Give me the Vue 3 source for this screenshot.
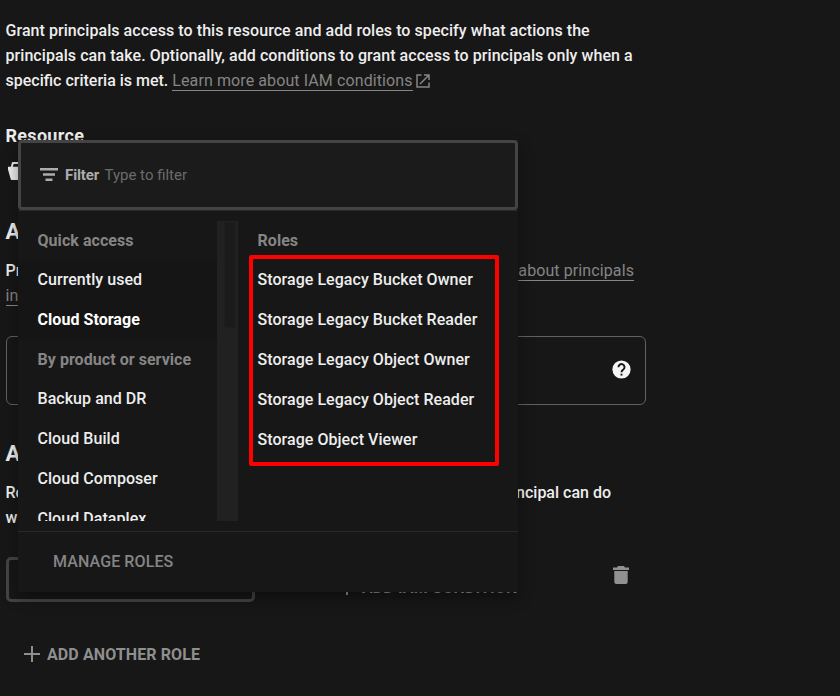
<script setup>
const menu = [
  { label: 'Quick access', type: 'header' },
  { label: 'Currently used', type: 'item shaded' },
  { label: 'Cloud Storage', type: 'item shaded active' },
  { label: 'By product or service', type: 'header' },
  { label: 'Backup and DR', type: 'item' },
  { label: 'Cloud Build', type: 'item' },
  { label: 'Cloud Composer', type: 'item' },
  { label: 'Cloud Dataplex', type: 'item' },
]
const roles = [
  'Storage Legacy Bucket Owner',
  'Storage Legacy Bucket Reader',
  'Storage Legacy Object Owner',
  'Storage Legacy Object Reader',
  'Storage Object Viewer',
]
</script>

<template>
  <main class="page">
    <p class="intro">
      Grant principals access to this resource and add roles to specify what actions the<br />
      principals can take. Optionally, add conditions to grant access to principals only when a<br />
      <span class="tight">specific criteria is met. </span><a class="link">Learn more about IAM conditions</a><svg class="external" viewBox="0 0 14 14"><path d="M5.500 1H1v12h12V8.500M8 1h5v5M13 1 4 10" /></svg>
    </p>

    <h3 class="resource-title">Resource</h3>
    <div class="resource">
      <svg class="bucket" viewBox="0 0 20 20"><path d="M0 5h3l1-4q.2-1 1-1h8q1 0 1.200 1l1 4H18v3l-2 10q0 1-1 1H4q-1 0-1.200-1L0 8zM5 5h8l-1-3H6z" /></svg>
    </div>

    <h2 class="title principals-title">Add principals</h2>
    <div class="split wide">
      <span>Principals are users, groups, domains</span><a class="link">about principals</a>
    </div>
    <div class="split"><a class="link">in IAM</a></div>
    <div class="principal-field">
      <svg class="help" viewBox="0 0 20 20">
        <circle cx="10" cy="10" r="9.600" fill="#f5f5f5" />
        <path d="M6.800 7.600a3.200 3.200 0 1 1 5.300 2.300C10.900 10.900 10 11.300 10 13" fill="none" stroke="#171717" stroke-width="2" />
        <path d="M9 14.400h2v2H9z" fill="#171717" />
      </svg>
    </div>

    <h2 class="title roles-title">Assign roles</h2>
    <div class="split medium">
      <span>Roles are composed of sets of permissions</span><span>principal can do</span>
    </div>
    <div class="split">with this resource.</div>
    <div class="role-row">
      <div class="role-field"></div>
      <button class="condition">
        <svg class="plus" viewBox="0 0 16 16"><path d="M8 0v16M0 8h16" /></svg>
        <span>ADD IAM CONDITION</span>
      </button>
      <svg class="trash" viewBox="0 0 16 18"><path d="M5 0h6l1 1.500h4v2.500H0V1.500h4zM1.300 5h13.400v11q0 2-2 2H3.300q-2 0-2-2z" /></svg>
    </div>
    <button class="another">
      <svg class="plus" viewBox="0 0 16 16"><path d="M8 0v16M0 8h16" /></svg>
      <span>ADD ANOTHER ROLE</span>
    </button>

    <section class="popup">
      <div class="filter">
        <svg class="filter-icon" viewBox="0 0 18 13"><path d="M0 1.300h18M3 6.500h12M5.500 11.700h7" /></svg>
        <b>Filter</b><span class="placeholder">Type to filter</span>
      </div>
      <div class="body">
        <div class="products">
          <div class="list">
            <div v-for="m in menu" :key="m.label" :class="m.type">{{ m.label }}</div>
          </div>
          <div class="track"><div class="thumb"></div></div>
        </div>
        <div class="roles">
          <div class="header">Roles</div>
          <div v-for="r in roles" :key="r" class="item">{{ r }}</div>
          <div class="highlight"></div>
        </div>
      </div>
      <div class="footer">MANAGE ROLES</div>
    </section>
  </main>
</template>

<style>
body { margin: 0; background: #171717; }
</style>

<style scoped>
* { box-sizing: border-box; }
.page {
  position: relative;
  width: 840px;
  height: 696px;
  padding: 18px 0 0 5.5px;
  overflow: hidden;
  background: #171717;
  color: #eee;
  font: 500 16px/25px Roboto, sans-serif;
}
.intro { margin: 0; white-space: nowrap; letter-spacing: .06px; }
.tight { letter-spacing: 0; }
.link {
  display: inline-block;
  height: 23px;
  color: #858585;
  font-weight: 400;
  border-bottom: 1px solid #858585;
  letter-spacing: .1px;
}
.external { width: 14px; height: 14px; margin-left: 3px; vertical-align: -2px; fill: none; stroke: #858585; stroke-width: 1.5; }
.resource-title { margin: 29px 0 0; font: 700 18px/27px Roboto, sans-serif; letter-spacing: .3px; }
.resource { height: 61px; padding: 13px 0 0 2.5px; }
.bucket { display: block; width: 19px; height: 19px; fill: #eee; fill-rule: evenodd; }
.title { margin: 0; font: 700 22px/30px Roboto, sans-serif; }
.principals-title { margin-top: 7px; }
.split { display: flex; justify-content: space-between; height: 25px; white-space: nowrap; }
.wide { width: 628.5px; margin-top: 11px; }
.medium { width: 605.5px; margin-top: 11px; }
.principal-field {
  display: flex;
  align-items: center;
  justify-content: flex-end;
  width: 640px;
  height: 69px;
  margin: 28px 0 0 .5px;
  padding-right: 14px;
  border: 1px solid #616161;
  border-radius: 6px;
}
.help { width: 19px; height: 19px; margin-top: -2px; }
.roles-title { margin-top: 34px; }
.role-row { display: flex; height: 45px; margin: 27px 0 0 .5px; }
.role-field { width: 249px; border: 3px solid #444; border-radius: 5px; }
button { display: flex; align-items: center; padding: 0; border: 0; background: none; color: #8f8f8f; font: 700 16px/24px Roboto, sans-serif; letter-spacing: .1px; white-space: nowrap; }
.plus { width: 16px; height: 16px; fill: none; stroke: currentColor; stroke-width: 2; }
.condition { width: 190px; height: 24px; gap: 7px; margin: 18px 0 0 84px; }
.condition span { padding-top: 2px; }
.trash { width: 16px; height: 18px; margin: 9px 0 0 83.500px; fill: #919191; }
.another { gap: 7px; margin: 40px 0 0 18.5px; }
.another .plus { margin-top: -1px; }
.another span { padding-top: 1px; }
.popup {
  position: absolute;
  left: 18px;
  top: 140px;
  width: 500px;
  height: 452px;
  background: #171717;
  box-shadow: 0 6px 14px rgba(0, 0, 0, .4);
}
.filter {
  display: flex;
  align-items: center;
  height: 70px;
  padding: 0 0 0 19px;
  background: #1b1b1b;
  border: 3px solid #444;
  border-radius: 4px;
  font-size: 15px;
  color: #adadad;
}
.filter b { width: 34.5px; margin-left: 7px; font-weight: 700; letter-spacing: -.1px; }
.filter-icon { width: 18px; height: 13px; margin-top: -2px; fill: none; stroke: #adadad; stroke-width: 2.4; }
.placeholder { margin-left: 5px; color: #6b6b6b; font-weight: 400; }
.body { display: flex; height: 321px; padding-top: 10px; border-top: 1px solid #292929; }
.products { display: flex; width: 220px; height: 300px; overflow: hidden; }
.list { width: 199px; }
.header { height: 39px; padding-left: 19.5px; color: #858585; font-weight: 700; line-height: 40px; letter-spacing: .05px; }
.item { height: 40px; padding-left: 19.5px; line-height: 40px; letter-spacing: .05px; }
.shaded { background: #151515; }
.active { color: #fff; font-weight: 700; }
.track { width: 21px; padding: 1px 2px 0 7px; background: #212121; }
.thumb { height: 106px; background: #1b1b1b; border: 1px solid #1e1e1e; }
.roles { position: relative; flex: 1; }
.highlight { position: absolute; left: 11px; top: 33.5px; width: 250px; height: 211px; border: 4px solid #f00; border-radius: 2px; }
.footer { height: 61px; padding-left: 35px; border-top: 1px solid #292929; color: #858585; line-height: 59px; letter-spacing: .1px; }
</style>
